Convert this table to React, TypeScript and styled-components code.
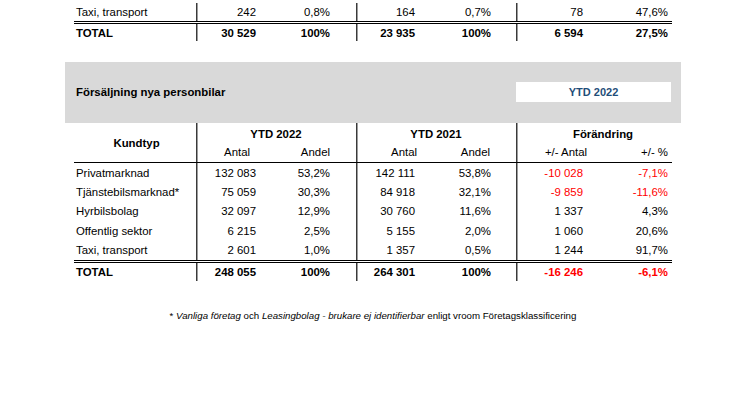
import styled, { createGlobalStyle, css } from "styled-components"

const GlobalStyle = createGlobalStyle`
  html, body {
    margin: 0;
    padding: 0;
    background: #ffffff;
  }
  body {
    font-family: "Liberation Sans", Arial, sans-serif;
    color: #000000;
  }
`

const COLS = "122px 80px 80px 80px 80px 78px 78px"

type Align = "left" | "center" | "right"

type Row = {
  label: string
  cells: string[]
  red?: boolean[]
}

const Page = styled.div`
  width: 746px;
  height: 419px;
  display: flex;
  flex-direction: column;
  font-size: 11.4px;
`

const Table = styled.div`
  width: 598px;
  margin-left: 74px;
  display: flex;
  flex-direction: column;
`

const Line = styled.div<{ $height: number; $total?: boolean; $padTop?: number }>`
  display: grid;
  grid-template-columns: ${COLS};
  height: ${({ $height }) => $height}px;
  box-sizing: border-box;
  padding-top: ${({ $padTop }) => $padTop ?? 0}px;
  font-weight: ${({ $total }) => ($total ? 700 : 400)};
  ${({ $total }) =>
    $total &&
    css`
      border-top: 3px double #000000;
    `}
`

const Cell = styled.div<{ $align?: Align; $pad?: number; $divider?: boolean; $red?: boolean }>`
  display: flex;
  align-items: center;
  justify-content: ${({ $align }) =>
    $align === "right" ? "flex-end" : $align === "center" ? "center" : "flex-start"};
  padding: 0 ${({ $pad, $align }) => ($align === "right" ? $pad ?? 0 : 0)}px 0
    ${({ $pad, $align }) => ($align !== "right" ? $pad ?? 0 : 0)}px;
  white-space: nowrap;
  color: ${({ $red }) => ($red ? "#ff0000" : "#000000")};
  ${({ $divider }) =>
    $divider &&
    css`
      box-shadow: inset 1.5px 0 0 #3a3a3a;
    `}
`

const Head = styled.div`
  display: grid;
  grid-template-columns: ${COLS};
  grid-template-rows: 19px 20px;
  border-bottom: 1px solid #000000;
`

const GroupCell = styled(Cell)<{ $col: number; $shift?: number }>`
  grid-column: ${({ $col }) => $col} / span 2;
  grid-row: 1;
  font-weight: 700;
  justify-content: center;
  padding: 2px 0 0 ${({ $shift }) => $shift ?? 0}px;
`

const KundCell = styled(Cell)`
  grid-column: 1;
  grid-row: 1 / span 2;
  font-weight: 700;
  justify-content: center;
  padding-left: 3px;
`

const SubCell = styled(Cell)<{ $col: number }>`
  grid-row: 2;
  grid-column: ${({ $col }) => $col};
`

const Band = styled.div`
  margin: 21px 0 0 65px;
  width: 616px;
  height: 61px;
  background: #d9d9d9;
  display: flex;
  align-items: center;
  padding: 0 10px 0 11px;
  box-sizing: border-box;
`

const BandTitle = styled.div`
  flex: 1;
  font-weight: 700;
  margin-top: -2px;
`

const PeriodBox = styled.div`
  width: 155px;
  height: 20px;
  background: #ffffff;
  display: flex;
  align-items: center;
  justify-content: center;
  color: #1f4e79;
  font-weight: 700;
  font-size: 11px;
  margin-bottom: 1px;
`

const Footnote = styled.p`
  margin: 29px 0 0;
  text-align: center;
  font-size: 9.7px;
  color: #000000;

  em {
    font-style: italic;
  }
`

// padding-right per numeric column, measured from the report
const PADS = [20, 26, 21, 25, 11, 4]
const DIVIDERS = [true, false, true, false, true, false]

const rows: Row[] = [
  { label: "Privatmarknad", cells: ["132 083", "53,2%", "142 111", "53,8%", "-10 028", "-7,1%"], red: [false, false, false, false, true, true] },
  { label: "Tjänstebilsmarknad*", cells: ["75 059", "30,3%", "84 918", "32,1%", "-9 859", "-11,6%"], red: [false, false, false, false, true, true] },
  { label: "Hyrbilsbolag", cells: ["32 097", "12,9%", "30 760", "11,6%", "1 337", "4,3%"] },
  { label: "Offentlig sektor", cells: ["6 215", "2,5%", "5 155", "2,0%", "1 060", "20,6%"] },
  { label: "Taxi, transport", cells: ["2 601", "1,0%", "1 357", "0,5%", "1 244", "91,7%"] },
]

const total: Row = {
  label: "TOTAL",
  cells: ["248 055", "100%", "264 301", "100%", "-16 246", "-6,1%"],
  red: [false, false, false, false, true, true],
}

function Cells({ row }: { row: Row }): JSX.Element {
  return (
    <>
      <Cell $pad={2}>{row.label}</Cell>
      {row.cells.map((value, i) => (
        <Cell key={i} $align="right" $pad={PADS[i]} $divider={DIVIDERS[i]} $red={row.red?.[i]}>
          {value}
        </Cell>
      ))}
    </>
  )
}

const SUBHEADS = ["Antal", "Andel", "Antal", "Andel", "+/- Antal", "+/- %"]
const SUBPADS = [26, 26, 19, 26, 7, 4]

export default function App(): JSX.Element {
  return (
    <>
      <GlobalStyle />
      <Page>
        <Table>
          <Line $height={21} $padTop={3}>
            <Cells row={{ label: "Taxi, transport", cells: ["242", "0,8%", "164", "0,7%", "78", "47,6%"] }} />
          </Line>
          <Line $height={20} $total>
            <Cells row={{ label: "TOTAL", cells: ["30 529", "100%", "23 935", "100%", "6 594", "27,5%"] }} />
          </Line>
        </Table>

        <Band>
          <BandTitle>Försäljning nya personbilar</BandTitle>
          <PeriodBox>YTD 2022</PeriodBox>
        </Band>

        <Table>
          <Head>
            <KundCell>Kundtyp</KundCell>
            <GroupCell $col={2} $divider>
              YTD 2022
            </GroupCell>
            <GroupCell $col={4} $divider>
              YTD 2021
            </GroupCell>
            <GroupCell $col={6} $divider $shift={18}>
              Förändring
            </GroupCell>
            {SUBHEADS.map((label, i) => (
              <SubCell key={i} $col={i + 2} $align="right" $pad={SUBPADS[i]} $divider={DIVIDERS[i]}>
                {label}
              </SubCell>
            ))}
          </Head>
          {rows.map((row) => (
            <Line key={row.label} $height={19.4}>
              <Cells row={row} />
            </Line>
          ))}
          <Line $height={21} $total>
            <Cells row={total} />
          </Line>
        </Table>

        <Footnote>
          * <em>Vanliga företag</em> och <em>Leasingbolag - brukare ej identifierbar</em> enligt vroom
          Företagsklassificering
        </Footnote>
      </Page>
    </>
  )
}
